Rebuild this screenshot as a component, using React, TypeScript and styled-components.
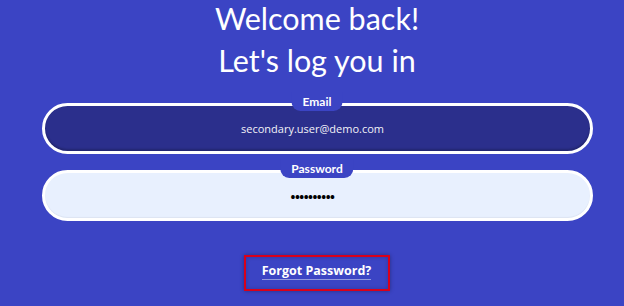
import styled, { createGlobalStyle } from 'styled-components';

const GlobalStyle = createGlobalStyle`
  html, body {
    margin: 0;
    padding: 0;
    background: #3b44c4;
  }
`;

const Page = styled.div`
  width: 624px;
  height: 306px;
  overflow: hidden;
  background: #3b44c4;
  display: flex;
  flex-direction: column;
  align-items: center;
  box-sizing: border-box;
  padding-left: 10px;
`;

const Title = styled.h1`
  margin: 0;
  display: flex;
  flex-direction: column;
  align-items: center;
  gap: 5px;
  color: #ffffff;
  font-family: Lato, 'Liberation Sans', sans-serif;
  font-weight: 400;
  font-size: 30.5px;
  line-height: 37px;
`;

const TitleLine = styled.span`
  display: block;
  white-space: nowrap;
`;

const Form = styled.div`
  margin-top: 24px;
  width: 551px;
  display: flex;
  flex-direction: column;
  gap: 16px;
`;

const Field = styled.div`
  position: relative;
`;

const Tab = styled.span`
  position: absolute;
  top: -11px;
  left: 50%;
  transform: translateX(-50%);
  height: 19px;
  padding: 0 11px;
  background: #3b44c4;
  border-radius: 0 0 9px 9px;
  color: #ffffff;
  font-family: Lato, 'Liberation Sans', sans-serif;
  font-weight: 700;
  font-size: 12px;
  line-height: 19px;
  white-space: nowrap;
`;

const Input = styled.div<{ $light?: boolean }>`
  box-sizing: border-box;
  height: 51px;
  padding-right: 9px;
  border: 3px solid #ffffff;
  border-radius: 26px;
  background: ${(p) => (p.$light ? '#e8f0fe' : '#2b2f8c')};
  color: ${(p) => (p.$light ? '#000000' : '#f2f2f7')};
  display: flex;
  align-items: center;
  justify-content: center;
  font-family: 'Open Sans', 'Liberation Sans', sans-serif;
  font-size: 11px;
  box-shadow: ${(p) =>
    p.$light ? 'inset 0 -1px 1px rgba(0, 0, 0, 0.05)' : 'inset 0 -2px 2px rgba(0, 0, 0, 0.2)'};
`;

const Dots = styled.span`
  font-size: 13px;
  letter-spacing: -0.5px;
  font-weight: 700;
  padding-top: 2px;
`;

const LinkBox = styled.div`
  margin-top: 34px;
  border: 2px solid #d9001b;
  box-shadow: 0 0 4px rgba(0, 0, 0, 0.35), inset 0 0 4px rgba(0, 0, 0, 0.2);
  padding: 5px 17px 9px 16px;
  display: flex;
  justify-content: center;
`;

const ForgotLink = styled.a`
  color: #ffffff;
  font-family: 'Open Sans', 'Liberation Sans', sans-serif;
  font-weight: 700;
  font-size: 12.5px;
  line-height: 17px;
  text-decoration: none;
  border-bottom: 1px solid rgba(255, 255, 255, 0.45);
  cursor: pointer;
`;

export default function App() {
  return (
    <>
      <GlobalStyle />
      <Page>
        <Title>
          <TitleLine>Welcome back!</TitleLine>
          <TitleLine>Let's log you in</TitleLine>
        </Title>
        <Form>
          <Field>
            <Tab>Email</Tab>
            <Input>secondary.user@demo.com</Input>
          </Field>
          <Field>
            <Tab>Password</Tab>
            <Input $light>
              <Dots>••••••••••</Dots>
            </Input>
          </Field>
        </Form>
        <LinkBox>
          <ForgotLink>Forgot Password?</ForgotLink>
        </LinkBox>
      </Page>
    </>
  );
}
